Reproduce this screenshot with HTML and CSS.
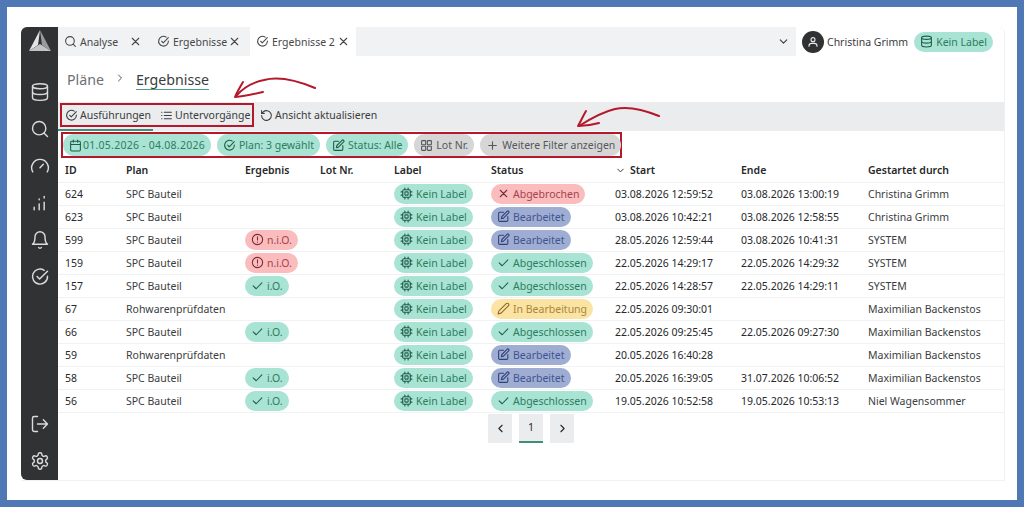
FILE: index.html
```html
<!DOCTYPE html>
<html lang="de">
<head>
    <meta charset="UTF-8">
    <title>Ergebnisse</title>
    <link rel="stylesheet" href="styles.css">
</head>
<body>
    <svg class="defs" width="0" height="0">
        <symbol id="i-check-circle" viewBox="0 0 24 24"><path d="M21 11a9 9 0 1 1-4-7"/><path d="M8.500 11.500l3 3L21 5"/></symbol>
        <symbol id="i-search" viewBox="0 0 24 24"><circle cx="11" cy="11" r="8"/><path d="M21 21l-4.300-4.300"/></symbol>
        <symbol id="i-x" viewBox="0 0 24 24"><path d="M6 6l12 12M18 6L6 18"/></symbol>
        <symbol id="i-check" viewBox="0 0 24 24"><path d="M4 12.500l5.500 5.500L20 7"/></symbol>
        <symbol id="i-db" viewBox="0 0 24 24"><ellipse cx="12" cy="5" rx="9" ry="3"/><path d="M3 5v14c0 1.700 4 3 9 3s9-1.300 9-3V5"/><path d="M3 12c0 1.700 4 3 9 3s9-1.300 9-3"/></symbol>
        <symbol id="i-chip" viewBox="0 0 24 24"><rect x="5" y="5" width="14" height="14" rx="2"/><rect x="9" y="9" width="6" height="6" rx="1"/><path d="M9 2v3M15 2v3M9 19v3M15 19v3M2 9h3M2 15h3M19 9h3M19 15h3"/></symbol>
        <symbol id="i-edit" viewBox="0 0 24 24"><path d="M12 4H5a2 2 0 0 0-2 2v13a2 2 0 0 0 2 2h13a2 2 0 0 0 2-2v-7"/><path d="M18.500 2.500a2.100 2.100 0 0 1 3 3L12 15l-4 1 1-4z"/></symbol>
        <symbol id="i-pencil" viewBox="0 0 24 24"><path d="M17 3a2.800 2.800 0 0 1 4 4L7.500 20.500 2 22l1.500-5.500z"/></symbol>
        <symbol id="i-alert" viewBox="0 0 24 24"><circle cx="12" cy="12" r="9.500"/><path d="M12 7v6M12 16.500v.5"/></symbol>
        <symbol id="i-list" viewBox="0 0 24 24"><path d="M8 6h13M8 12h13M8 18h13M3 6h.5M3 12h.5M3 18h.5"/></symbol>
        <symbol id="i-undo" viewBox="0 0 24 24"><path d="M3 12a9 9 0 1 0 3-6.700L3 8"/><path d="M3 3v5h5"/></symbol>
        <symbol id="i-cal" viewBox="0 0 24 24"><rect x="3" y="4" width="18" height="18" rx="2"/><path d="M16 2v4M8 2v4M3 10h18"/></symbol>
        <symbol id="i-grid" viewBox="0 0 24 24"><rect x="3" y="3" width="7.500" height="7.500" rx="1"/><rect x="13.500" y="3" width="7.500" height="7.500" rx="1"/><rect x="3" y="13.500" width="7.500" height="7.500" rx="1"/><rect x="13.500" y="13.500" width="7.500" height="7.500" rx="1"/></symbol>
        <symbol id="i-plus" viewBox="0 0 24 24"><path d="M12 5v14M5 12h14"/></symbol>
        <symbol id="i-down" viewBox="0 0 24 24"><path d="M6 9l6 6 6-6"/></symbol>
        <symbol id="i-left" viewBox="0 0 24 24"><path d="M15 6l-6 6 6 6"/></symbol>
        <symbol id="i-right" viewBox="0 0 24 24"><path d="M9 6l6 6-6 6"/></symbol>
        <symbol id="i-gauge" viewBox="0 0 24 24"><path d="M12 14l4-4"/><path d="M3.300 19a10 10 0 1 1 17.400 0"/></symbol>
        <symbol id="i-bars" viewBox="0 0 24 24"><path d="M5 20v-3M11 20v-7M11 8V7M17 20v-9M17 6V4"/></symbol>
        <symbol id="i-bell" viewBox="0 0 24 24"><path d="M6 8a6 6 0 0 1 12 0c0 7 3 9 3 9H3s3-2 3-9"/><path d="M10.300 21a2 2 0 0 0 3.400 0"/></symbol>
        <symbol id="i-logout" viewBox="0 0 24 24"><path d="M9 21H5a2 2 0 0 1-2-2V5a2 2 0 0 1 2-2h4"/><path d="M16 17l5-5-5-5M21 12H9"/></symbol>
        <symbol id="i-gear" viewBox="0 0 24 24"><circle cx="12" cy="12" r="3"/><path d="M12.200 2h-.4a2 2 0 0 0-2 2v.2a2 2 0 0 1-1 1.700l-.4.300a2 2 0 0 1-2 0l-.2-.1a2 2 0 0 0-2.700.7l-.2.400a2 2 0 0 0 .7 2.700l.2.100a2 2 0 0 1 1 1.700v.5a2 2 0 0 1-1 1.700l-.2.100a2 2 0 0 0-.7 2.700l.2.400a2 2 0 0 0 2.700.7l.2-.1a2 2 0 0 1 2 0l.4.300a2 2 0 0 1 1 1.700v.2a2 2 0 0 0 2 2h.4a2 2 0 0 0 2-2v-.2a2 2 0 0 1 1-1.700l.4-.3a2 2 0 0 1 2 0l.2.100a2 2 0 0 0 2.700-.7l.2-.4a2 2 0 0 0-.7-2.700l-.2-.1a2 2 0 0 1-1-1.700v-.5a2 2 0 0 1 1-1.700l.2-.1a2 2 0 0 0 .7-2.700l-.2-.4a2 2 0 0 0-2.700-.7l-.2.100a2 2 0 0 1-2 0l-.4-.3a2 2 0 0 1-1-1.700V4a2 2 0 0 0-2-2z"/></symbol>
    </svg>

    <div class="frame">
        <div class="app">
            <aside class="sidebar">
                <svg class="logo" viewBox="0 0 22 21">
                    <polygon points="11,0 0,21 9,15" fill="#e4e4e4"/>
                    <polygon points="11,0 22,21 13,15" fill="#9b9b9b"/>
                    <polygon points="0,21 22,21 11,14" fill="#c4c4c4"/>
                </svg>
                <nav class="side-nav">
                    <svg class="side-icon"><use href="#i-db"/></svg>
                    <svg class="side-icon"><use href="#i-search"/></svg>
                    <svg class="side-icon"><use href="#i-gauge"/></svg>
                    <svg class="side-icon"><use href="#i-bars"/></svg>
                    <svg class="side-icon"><use href="#i-bell"/></svg>
                    <svg class="side-icon"><use href="#i-check-circle"/></svg>
                </nav>
                <nav class="side-nav side-bottom">
                    <svg class="side-icon"><use href="#i-logout"/></svg>
                    <svg class="side-icon"><use href="#i-gear"/></svg>
                </nav>
            </aside>

            <main class="content">
                <header class="topbar">
                    <div class="tabs">
                        <div class="tab tab-a">
                            <svg class="icon"><use href="#i-search"/></svg><span class="tab-name">Analyse</span>
                            <svg class="icon"><use href="#i-x"/></svg>
                        </div>
                        <div class="tab tab-b">
                            <svg class="icon"><use href="#i-check-circle"/></svg><span class="tab-name">Ergebnisse</span>
                            <svg class="icon"><use href="#i-x"/></svg>
                        </div>
                        <div class="tab tab-c">
                            <svg class="icon"><use href="#i-check-circle"/></svg><span class="tab-name">Ergebnisse 2</span>
                            <svg class="icon"><use href="#i-x"/></svg>
                        </div>
                        <div class="tabs-rest">
                            <svg class="icon"><use href="#i-down"/></svg>
                        </div>
                    </div>
                    <div class="user">
                        <span class="avatar">
                            <svg viewBox="0 0 24 24"><circle cx="12" cy="8.500" r="3"/><path d="M6 19v-1a4 4 0 0 1 4-4h4a4 4 0 0 1 4 4v1"/></svg>
                        </span>
                        <span class="user-name">Christina Grimm</span>
                        <span class="chip green user-chip"><svg class="icon"><use href="#i-db"/></svg>Kein Label</span>
                    </div>
                </header>

                <div class="crumbs">
                    <span class="crumb-parent">Pläne</span>
                    <svg class="crumb-sep"><use href="#i-right"/></svg>
                    <span class="crumb-current">Ergebnisse</span>
                </div>

                <div class="toolbar">
                    <div class="marked views">
                        <span class="tool"><svg class="icon"><use href="#i-check-circle"/></svg>Ausführungen</span>
                        <span class="tool"><svg class="icon"><use href="#i-list"/></svg>Untervorgänge</span>
                    </div>
                    <span class="tool"><svg class="icon"><use href="#i-undo"/></svg>Ansicht aktualisieren</span>
                </div>

                <div class="marked filters">
                    <span class="chip green"><svg class="icon"><use href="#i-cal"/></svg><span class="date-range">01.05.2026 - 04.08.2026</span></span>
                    <span class="chip green"><svg class="icon"><use href="#i-check-circle"/></svg>Plan: 3 gewählt</span>
                    <span class="chip green"><svg class="icon"><use href="#i-edit"/></svg>Status: Alle</span>
                    <span class="chip grey"><svg class="icon"><use href="#i-grid"/></svg>Lot Nr.</span>
                    <span class="chip grey"><svg class="icon"><use href="#i-plus"/></svg>Weitere Filter anzeigen</span>
                </div>

                <table class="runs">
                    <thead>
                        <tr>
                            <th class="c-id">ID</th>
                            <th class="c-plan">Plan</th>
                            <th class="c-res">Ergebnis</th>
                            <th class="c-lot">Lot Nr.</th>
                            <th class="c-label">Label</th>
                            <th class="c-status">Status</th>
                            <th class="c-start"><svg class="icon sort"><use href="#i-down"/></svg>Start</th>
                            <th class="c-end">Ende</th>
                            <th>Gestartet durch</th>
                        </tr>
                    </thead>
                    <tbody>
                        <tr>
                            <td class="num">624</td><td>SPC Bauteil</td><td></td><td></td>
                            <td><span class="chip green"><svg class="icon"><use href="#i-chip"/></svg>Kein Label</span></td>
                            <td><span class="chip red"><svg class="icon"><use href="#i-x"/></svg>Abgebrochen</span></td>
                            <td class="num">03.08.2026 12:59:52</td><td class="num">03.08.2026 13:00:19</td><td>Christina Grimm</td>
                        </tr>
                        <tr>
                            <td class="num">623</td><td>SPC Bauteil</td><td></td><td></td>
                            <td><span class="chip green"><svg class="icon"><use href="#i-chip"/></svg>Kein Label</span></td>
                            <td><span class="chip blue"><svg class="icon"><use href="#i-edit"/></svg>Bearbeitet</span></td>
                            <td class="num">03.08.2026 10:42:21</td><td class="num">03.08.2026 12:58:55</td><td>Christina Grimm</td>
                        </tr>
                        <tr>
                            <td class="num">599</td><td>SPC Bauteil</td>
                            <td><span class="chip red"><svg class="icon"><use href="#i-alert"/></svg>n.i.O.</span></td><td></td>
                            <td><span class="chip green"><svg class="icon"><use href="#i-chip"/></svg>Kein Label</span></td>
                            <td><span class="chip blue"><svg class="icon"><use href="#i-edit"/></svg>Bearbeitet</span></td>
                            <td class="num">28.05.2026 12:59:44</td><td class="num">03.08.2026 10:41:31</td><td>SYSTEM</td>
                        </tr>
                        <tr>
                            <td class="num">159</td><td>SPC Bauteil</td>
                            <td><span class="chip red"><svg class="icon"><use href="#i-alert"/></svg>n.i.O.</span></td><td></td>
                            <td><span class="chip green"><svg class="icon"><use href="#i-chip"/></svg>Kein Label</span></td>
                            <td><span class="chip green"><svg class="icon"><use href="#i-check"/></svg>Abgeschlossen</span></td>
                            <td class="num">22.05.2026 14:29:17</td><td class="num">22.05.2026 14:29:32</td><td>SYSTEM</td>
                        </tr>
                        <tr>
                            <td class="num">157</td><td>SPC Bauteil</td>
                            <td><span class="chip green"><svg class="icon"><use href="#i-check"/></svg>i.O.</span></td><td></td>
                            <td><span class="chip green"><svg class="icon"><use href="#i-chip"/></svg>Kein Label</span></td>
                            <td><span class="chip green"><svg class="icon"><use href="#i-check"/></svg>Abgeschlossen</span></td>
                            <td class="num">22.05.2026 14:28:57</td><td class="num">22.05.2026 14:29:11</td><td>SYSTEM</td>
                        </tr>
                        <tr>
                            <td class="num">67</td><td>Rohwarenprüfdaten</td><td></td><td></td>
                            <td><span class="chip green"><svg class="icon"><use href="#i-chip"/></svg>Kein Label</span></td>
                            <td><span class="chip yellow"><svg class="icon"><use href="#i-pencil"/></svg>In Bearbeitung</span></td>
                            <td class="num">22.05.2026 09:30:01</td><td class="num"></td><td>Maximilian Backenstos</td>
                        </tr>
                        <tr>
                            <td class="num">66</td><td>SPC Bauteil</td>
                            <td><span class="chip green"><svg class="icon"><use href="#i-check"/></svg>i.O.</span></td><td></td>
                            <td><span class="chip green"><svg class="icon"><use href="#i-chip"/></svg>Kein Label</span></td>
                            <td><span class="chip green"><svg class="icon"><use href="#i-check"/></svg>Abgeschlossen</span></td>
                            <td class="num">22.05.2026 09:25:45</td><td class="num">22.05.2026 09:27:30</td><td>Maximilian Backenstos</td>
                        </tr>
                        <tr>
                            <td class="num">59</td><td>Rohwarenprüfdaten</td><td></td><td></td>
                            <td><span class="chip green"><svg class="icon"><use href="#i-chip"/></svg>Kein Label</span></td>
                            <td><span class="chip blue"><svg class="icon"><use href="#i-edit"/></svg>Bearbeitet</span></td>
                            <td class="num">20.05.2026 16:40:28</td><td class="num"></td><td>Maximilian Backenstos</td>
                        </tr>
                        <tr>
                            <td class="num">58</td><td>SPC Bauteil</td>
                            <td><span class="chip green"><svg class="icon"><use href="#i-check"/></svg>i.O.</span></td><td></td>
                            <td><span class="chip green"><svg class="icon"><use href="#i-chip"/></svg>Kein Label</span></td>
                            <td><span class="chip blue"><svg class="icon"><use href="#i-edit"/></svg>Bearbeitet</span></td>
                            <td class="num">20.05.2026 16:39:05</td><td class="num">31.07.2026 10:06:52</td><td>Maximilian Backenstos</td>
                        </tr>
                        <tr>
                            <td class="num">56</td><td>SPC Bauteil</td>
                            <td><span class="chip green"><svg class="icon"><use href="#i-check"/></svg>i.O.</span></td><td></td>
                            <td><span class="chip green"><svg class="icon"><use href="#i-chip"/></svg>Kein Label</span></td>
                            <td><span class="chip green"><svg class="icon"><use href="#i-check"/></svg>Abgeschlossen</span></td>
                            <td class="num">19.05.2026 10:52:58</td><td class="num">19.05.2026 10:53:13</td><td>Niel Wagensommer</td>
                        </tr>
                    </tbody>
                </table>

                <div class="pager">
                    <span class="page"><svg class="icon"><use href="#i-left"/></svg></span>
                    <span class="page page-on">1</span>
                    <span class="page"><svg class="icon"><use href="#i-right"/></svg></span>
                </div>
            </main>
        </div>
    </div>

    <!-- hand drawn arrows lying over the screenshot -->
    <svg class="arrows" viewBox="0 0 1024 507">
        <path d="M315 88C296 80 279 76 264 80C254 82 243 88 236 96" />
        <path d="M243 82C240 87 237 92 235 97C244 96 254 94 263 92" />
        <path d="M659 116C642 109 628 106 615 109C602 112 590 119 579 126" />
        <path d="M586 111C583 116 581 121 578 126C585 126 592 125 599 123" />
    </svg>
</body>
</html>
```

FILE: styles.css
```css
* {
    box-sizing: border-box;
}

body {
    margin: 0;
    font-family: "Noto Sans", "Open Sans", sans-serif;
    font-size: 10.5px;
    color: #3a3d40;
    background: #fff;
}

.defs {
    position: absolute;
}

.frame {
    width: 1024px;
    height: 507px;
    border: 7px solid #4f78b5;
    padding: 20px 12px 19px 14px;
    overflow: hidden;
}

.app {
    display: flex;
    height: 100%;
    border-right: 1px solid #f0f1f1;
    border-bottom: 1px solid #f0f1f1;
    border-top-right-radius: 6px;
}

.icon,
.side-icon,
.crumb-sep {
    fill: none;
    stroke: currentColor;
    stroke-width: 2;
    stroke-linecap: round;
    stroke-linejoin: round;
    flex: none;
}

.icon {
    width: 13px;
    height: 13px;
}

/* Sidebar */
.sidebar {
    width: 37px;
    flex: none;
    display: flex;
    flex-direction: column;
    align-items: center;
    background: #303234;
    border-radius: 6px 0 0 6px;
    padding-top: 3px;
    padding-bottom: 9px;
}

.logo {
    width: 22px;
    height: 21px;
}

.side-nav {
    display: flex;
    flex-direction: column;
    gap: 17px;
    margin-top: 31px;
}

.side-bottom {
    margin-top: auto;
}

.side-icon {
    display: block;
    width: 20px;
    height: 20px;
    color: #dcdcdc;
    stroke-width: 1.700;
}

/* Top bar */
.content {
    flex: 1;
    min-width: 0;
}

.topbar {
    display: flex;
    height: 29px;
}

.tabs {
    display: flex;
    width: 738px;
    background: #f1f2f3;
}

.tab {
    display: flex;
    align-items: center;
    padding: 0 9px 0 6px;
    color: #45484b;
    white-space: nowrap;
}

.tab-name {
    flex: 1;
    margin-left: 3px;
}

.tab-a {
    width: 93px;
}

.tab-b {
    width: 99px;
}

.tab-c {
    width: 106px;
    padding-right: 6px;
    background: #fff;
}

.tabs-rest {
    flex: 1;
    display: flex;
    align-items: center;
    justify-content: flex-end;
    padding-right: 6px;
}

.user {
    flex: 1;
    display: flex;
    align-items: center;
    padding-left: 6px;
}

.avatar {
    width: 22px;
    height: 22px;
    flex: none;
    border-radius: 50%;
    background: #2f3133;
    display: flex;
    align-items: center;
    justify-content: center;
}

.avatar svg {
    width: 16px;
    height: 16px;
    fill: none;
    stroke: #e6e6e6;
    stroke-width: 1.700;
}

.user-name {
    margin-left: 3px;
    margin-right: 6px;
    white-space: nowrap;
}

.user-chip {
    height: 22px;
    border-radius: 11px;
}

/* Breadcrumb */
.crumbs {
    height: 46px;
    display: flex;
    align-items: center;
    padding-left: 9px;
    padding-top: 1px;
    font-size: 14.2px;
}

.crumb-parent {
    color: #6d7073;
}

.crumb-sep {
    width: 12px;
    height: 12px;
    margin: -3px 10px 0 10px;
    color: #55585b;
}

.crumb-current {
    border-bottom: 1px solid #4d9c84;
    line-height: 19px;
}

/* Toolbar and filters */
.toolbar {
    position: relative;
    display: flex;
    align-items: flex-start;
    height: 29px;
    background: #ebeced;
    gap: 6px;
}

.toolbar::after {
    content: "";
    position: absolute;
    left: 0;
    bottom: 0;
    width: 95px;
    height: 2px;
    background: #3f8f78;
}

.marked {
    border: 2px solid #b5182b;
}

.views {
    display: flex;
    gap: 9px;
    width: 194px;
    height: 24px;
    margin-left: 2px;
    margin-top: 1px;
    padding-left: 3px;
    align-items: center;
}

.tool {
    display: flex;
    align-items: center;
    gap: 2px;
    color: #3a3d40;
    white-space: nowrap;
}

.toolbar > .tool {
    height: 26px;
}

.filters {
    display: flex;
    align-items: center;
    gap: 6px;
    width: 561px;
    height: 26px;
    margin: 1px 0 0 3px;
}

.chip {
    display: inline-flex;
    align-items: center;
    gap: 3px;
    height: 20px;
    padding: 0 6px;
    border-radius: 10px;
    white-space: nowrap;
    vertical-align: middle;
}

.filters .chip {
    height: 22px;
    border-radius: 11px;
}

.date-range {
    margin-left: -2px;
    letter-spacing: 0.25px;
}

.green {
    background: #a8e3d3;
    color: #2e7d60;
}

.green .icon {
    color: #1f5e47;
}

.red {
    background: #fbbcbd;
    color: #a3444f;
}

.red .icon {
    color: #7a2c38;
}

.blue {
    background: #9fadd3;
    color: #3e5590;
}

.blue .icon {
    color: #2f4379;
}

.yellow {
    background: #fbe3a3;
    color: #a8873a;
}

.yellow .icon {
    color: #8a6c28;
}

.grey {
    background: #d6d6d6;
    color: #55585b;
}

/* Table */
.runs {
    width: 100%;
    table-layout: fixed;
    border-collapse: collapse;
    margin-top: 1px;
}

.runs th {
    height: 23px;
    padding: 0 0 0 7px;
    text-align: left;
    font-weight: 600;
    color: #26282a;
    border-bottom: 1px solid #f1f2f2;
}

.runs td {
    height: 23px;
    padding: 0 0 0 7px;
    border-bottom: 1px solid #f1f2f2;
    white-space: nowrap;
}

.num {
    color: #26282a;
}

.c-id { width: 61px; }
.c-plan { width: 119px; }
.c-res { width: 75px; }
.c-lot { width: 74px; }
.c-label { width: 97px; }
.c-status { width: 124px; }
.c-start { width: 126px; }
.c-end { width: 127px; }

.sort {
    width: 11px;
    height: 11px;
    margin-right: 4px;
    vertical-align: -2px;
}

/* Pager */
.pager {
    display: flex;
    justify-content: center;
    gap: 7px;
    margin-top: 1px;
}

.page {
    display: flex;
    align-items: center;
    justify-content: center;
    width: 24px;
    height: 29px;
    background: #ebeced;
    color: #26282a;
}

.page-on {
    border-bottom: 2px solid #3f8f78;
}

/* Annotation arrows */
.arrows {
    position: absolute;
    left: 0;
    top: 0;
    width: 1024px;
    height: 507px;
    pointer-events: none;
    fill: none;
    stroke: #b5182b;
    stroke-width: 2;
    stroke-linecap: round;
    stroke-linejoin: round;
}
```
